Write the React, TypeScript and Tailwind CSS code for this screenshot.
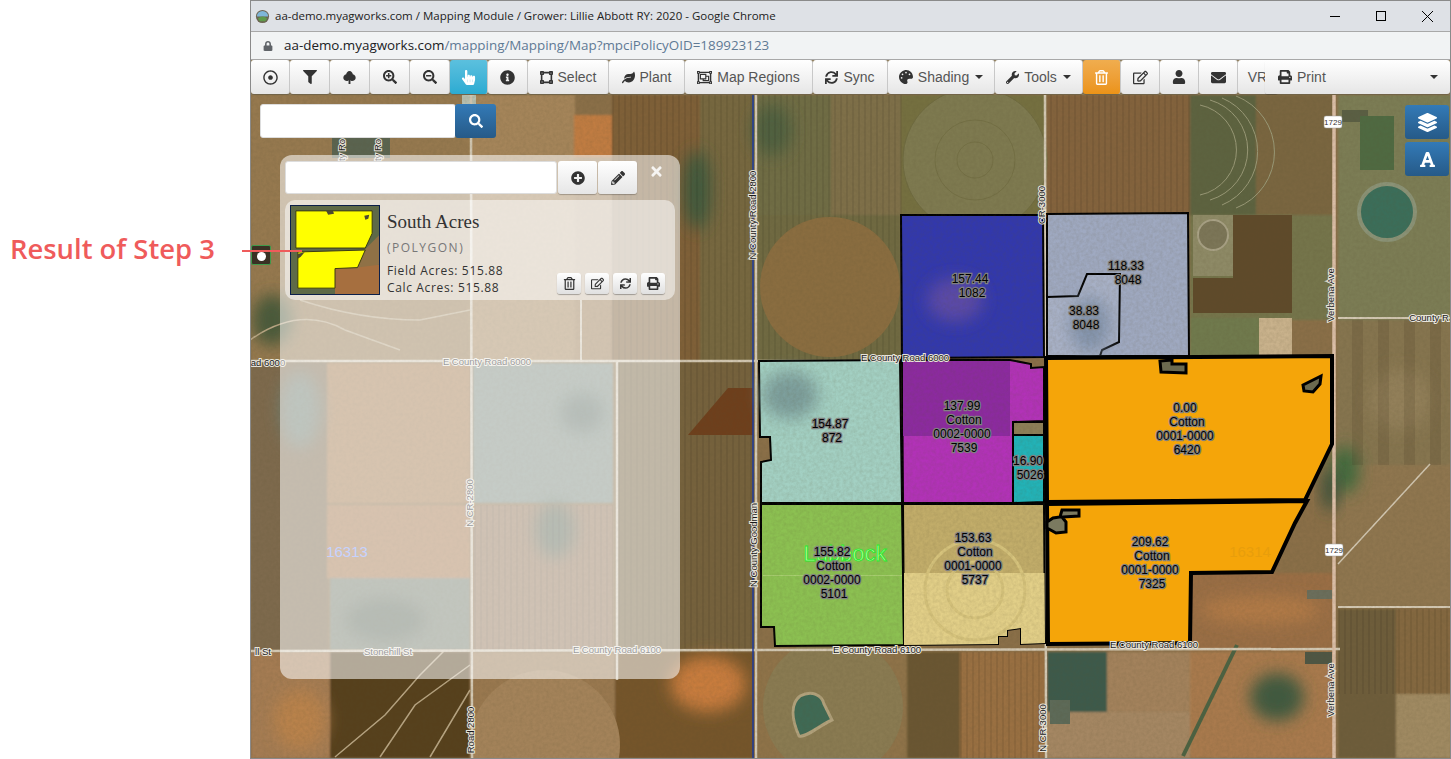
import type { ReactNode } from "react";
import {
  FaEnvelope,
  FaFilter,
  FaFont,
  FaHandPointer,
  FaInfoCircle,
  FaLayerGroup,
  FaLeaf,
  FaLock,
  FaPalette,
  FaPencilAlt,
  FaPlusCircle,
  FaPrint,
  FaRegDotCircle,
  FaRegEdit,
  FaRegObjectGroup,
  FaRegTrashAlt,
  FaSearch,
  FaSearchMinus,
  FaSearchPlus,
  FaSync,
  FaTimes,
  FaUser,
  FaVectorSquare,
  FaWrench,
} from "react-icons/fa";

// satellite background blocks: x, y, w, h, colour
const fields: [number, number, number, number, string][] = [
  [251, 95, 219, 266, "#96794f"],
  [470, 95, 105, 266, "#a5855a"],
  [574, 115, 38, 42, "#c07c42"],
  [575, 157, 40, 204, "#9c7c52"],
  [612, 95, 90, 266, "#7f6039"],
  [700, 95, 55, 266, "#77683f"],
  [757, 95, 74, 120, "#6f6d45"],
  [831, 95, 70, 120, "#7f7048"],
  [757, 215, 144, 146, "#6f6a42"],
  [901, 95, 144, 120, "#74703f"],
  [1047, 95, 143, 120, "#84643c"],
  [1190, 95, 66, 120, "#5d6340"],
  [1256, 95, 78, 120, "#7a6640"],
  [1190, 215, 144, 105, "#75744c"],
  [1190, 318, 70, 40, "#6f7a4d"],
  [1338, 95, 113, 225, "#7b7d54"],
  [1338, 320, 113, 145, "#867450"],
  [1338, 465, 113, 142, "#8f7650"],
  [1338, 609, 58, 149, "#6e5d3a"],
  [1396, 609, 55, 85, "#84673f"],
  [1396, 694, 55, 64, "#a08a62"],
  [251, 361, 77, 290, "#7e6a4e"],
  [327, 363, 143, 140, "#a67c50"],
  [473, 363, 140, 140, "#7f8d82"],
  [327, 505, 143, 73, "#a87a4f"],
  [330, 578, 140, 72, "#78806f"],
  [473, 505, 140, 145, "#96785a"],
  [617, 361, 138, 290, "#76623e"],
  [251, 652, 80, 106, "#a57c52"],
  [330, 652, 140, 106, "#57401f"],
  [470, 652, 145, 106, "#99784f"],
  [615, 652, 140, 106, "#75542c"],
  [757, 652, 150, 106, "#8f7348"],
  [907, 652, 53, 106, "#6a5630"],
  [960, 652, 87, 106, "#9a6f42"],
  [1047, 652, 60, 60, "#3e5a4c"],
  [1107, 652, 83, 60, "#a3825c"],
  [1047, 712, 143, 46, "#a58763"],
  [1190, 573, 144, 78, "#9a6e45"],
  [1190, 652, 144, 106, "#a97a4e"],
];

// soft patches: cx, cy, rx, ry, colour
const patches: [number, number, number, number, string][] = [
  [300, 410, 20, 38, "#6f7f72"],
  [555, 530, 20, 28, "#5f6a58"],
  [708, 684, 38, 28, "#c87c3c"],
  [1277, 697, 27, 24, "#3f5a40"],
  [1345, 470, 14, 24, "#3f6a3c"],
  [697, 190, 14, 40, "#3f5a3c"],
  [772, 130, 20, 26, "#4f6040"],
  [1260, 610, 60, 14, "#b27a46"],
  [272, 320, 20, 26, "#4a5a3a"],
  [1400, 400, 30, 30, "#93805a"],
  [582, 413, 22, 20, "#606f66"],
  [1330, 490, 8, 22, "#38503a"],
  [385, 620, 40, 22, "#5f6b5c"],
  [300, 720, 26, 30, "#b9824c"],
];

// road lines: x1, y1, x2, y2, width
const roads: [number, number, number, number, number][] = [
  [251, 361, 900, 361, 2.5],
  [1190, 358, 1334, 358, 2],
  [251, 651, 1340, 649, 2.5],
  [471, 95, 472, 758, 2.5],
  [617, 361, 617, 680, 2.5],
  [581, 300, 581, 361, 2],
  [756, 95, 756, 758, 2.5],
  [1045, 95, 1046, 758, 2.5],
  [1334, 95, 1334, 758, 3.5],
  [1338, 318, 1451, 318, 2],
  [1338, 607, 1451, 607, 2],
  [1338, 564, 1430, 464, 1.5],
];

const parcelLabels: { x: number; y: number; lines: string[] }[] = [
  { x: 970, y: 283, lines: ["157.44", "1082"] },
  { x: 1126, y: 270, lines: ["118.33", "8048"] },
  { x: 1084, y: 315, lines: ["38.83", "8048"] },
  { x: 830, y: 428, lines: ["154.87", "872"] },
  { x: 962, y: 410, lines: ["137.99", "Cotton", "0002-0000", "7539"] },
  { x: 1028, y: 465, lines: ["16.90", "5026"] },
  { x: 1185, y: 412, lines: ["0.00", "Cotton", "0001-0000", "6420"] },
  { x: 832, y: 556, lines: ["155.82", "Cotton", "0002-0000", "5101"] },
  { x: 973, y: 542, lines: ["153.63", "Cotton", "0001-0000", "5737"] },
  { x: 1150, y: 546, lines: ["209.62", "Cotton", "0001-0000", "7325"] },
];

const roadLabels: { x: number; y: number; text: string; rotate?: boolean }[] = [
  { x: 268, y: 366, text: "ad 6000" },
  { x: 487, y: 365, text: "E County Road 6000" },
  { x: 263, y: 655, text: "ll St" },
  { x: 388, y: 655, text: "Stonehill St" },
  { x: 617, y: 653, text: "E County Road 6100" },
  { x: 877, y: 653, text: "E County Road 6100" },
  { x: 1154, y: 648, text: "E County Road 6100" },
  { x: 905, y: 361, text: "E County Road 6000" },
  { x: 1429, y: 321, text: "County R" },
  { x: 473, y: 503, text: "N CR-2800", rotate: true },
  { x: 474, y: 730, text: "Road 2800", rotate: true },
  { x: 345, y: 150, text: "ty Ro", rotate: true },
  { x: 381, y: 150, text: "ty Ro", rotate: true },
  { x: 756, y: 215, text: "N County Road 2800", rotate: true },
  { x: 757, y: 545, text: "N County Goodman", rotate: true },
  { x: 1045, y: 205, text: "CR-3000", rotate: true },
  { x: 1046, y: 728, text: "N CR-3000", rotate: true },
  { x: 1334, y: 295, text: "Verbena Ave", rotate: true },
  { x: 1334, y: 690, text: "Verbena Ave", rotate: true },
];

function SatelliteMap() {
  return (
    <svg viewBox="251 95 1199 663" className="absolute inset-0 h-full w-full" preserveAspectRatio="none">
      <defs>
        <pattern id="rows" width="6" height="10" patternUnits="userSpaceOnUse">
          <rect width="2" height="10" fill="#000" opacity="0.07" />
        </pattern>
        <pattern id="bands" width="26" height="10" patternUnits="userSpaceOnUse">
          <rect width="11" height="10" fill="#3c2c14" opacity="0.14" />
        </pattern>
        <filter id="soft" x="-50%" y="-50%" width="200%" height="200%">
          <feGaussianBlur stdDeviation="8" />
        </filter>
        <filter id="edge" x="0" y="0" width="100%" height="100%">
          <feGaussianBlur stdDeviation="1.2" />
        </filter>
        <filter id="grain" x="0" y="0" width="100%" height="100%">
          <feTurbulence type="fractalNoise" baseFrequency="0.3" numOctaves="3" seed="4" />
          <feColorMatrix values="0 0 0 0 0.1  0 0 0 0 0.08  0 0 0 0 0.03  0.9 0 0 0 -0.25" />
        </filter>
        <clipPath id="tanClip">
          <polygon points="903,504 1044,504 1045,643 1021,644 1021,628 1007,630 1007,636 998,636 998,644 904,645" />
        </clipPath>
      </defs>

      <rect x="251" y="95" width="1199" height="663" fill="#8a6f48" />
      <g filter="url(#edge)">
        {fields.map(([x, y, w, h, c], i) => (
          <rect key={i} x={x} y={y} width={w} height={h} fill={c} />
        ))}
      </g>
      {patches.map(([cx, cy, rx, ry, c], i) => (
        <ellipse key={i} cx={cx} cy={cy} rx={rx} ry={ry} fill={c} filter="url(#soft)" />
      ))}
      <rect x="612" y="95" width="290" height="266" fill="url(#rows)" />
      <rect x="1047" y="95" width="143" height="120" fill="url(#rows)" />
      <rect x="617" y="361" width="138" height="290" fill="url(#rows)" />
      <rect x="473" y="505" width="140" height="145" fill="url(#rows)" />
      <rect x="960" y="652" width="87" height="106" fill="url(#rows)" />
      <rect x="1338" y="320" width="113" height="145" fill="url(#bands)" />
      <rect x="1338" y="609" width="113" height="85" fill="url(#rows)" />

      {/* dark L-shaped field, NE corner */}
      <path d="M1233 215 H1292 V313 H1193 V278 H1233Z" fill="#5f4a2a" />
      <rect x="1193" y="215" width="40" height="61" fill="#8e8a66" />
      <circle cx="1213" cy="235" r="15" fill="#7c7658" stroke="#a9a286" strokeWidth="2" />
      <rect x="1259" y="318" width="33" height="38" fill="#c9b28c" />

      {/* wedge field left of the county line */}
      <polygon points="688,435 728,388 753,388 753,435" fill="#6e3f1c" />

      {/* centre pivots */}
      <circle cx="830" cy="287" r="70" fill="#8a6d40" />
      <circle cx="975" cy="160" r="72" fill="#7e7a50" stroke="#6f6b40" />
      <circle cx="975" cy="160" r="40" fill="none" stroke="#6f6b40" opacity="0.7" />
      <circle cx="975" cy="160" r="18" fill="none" stroke="#6f6b40" opacity="0.7" />
      <circle cx="833" cy="707" r="70" fill="#8a7b52" />
      <path d="M800 696 C812 690 822 695 824 704 L832 720 C820 725 806 738 799 736 C792 720 790 704 800 696Z" fill="#3f6a55" stroke="#b2a27c" strokeWidth="3" />
      <circle cx="1387" cy="212" r="28" fill="#3b6e5a" stroke="#8b9377" strokeWidth="4" />
      <circle cx="545" cy="745" r="75" fill="#a4835a" />
      <path d="M1200 105 A46 46 0 0 1 1200 195 M1210 100 A52 52 0 0 1 1210 200 M1222 98 A58 58 0 0 1 1222 205 M1236 96 A60 60 0 0 1 1236 208" fill="none" stroke="#9a9a78" strokeWidth="1" />

      {/* homesteads under the panel and along the roads */}
      <rect x="332" y="130" width="58" height="28" fill="#5a6450" />
      <rect x="462" y="95" width="14" height="14" fill="#b8c0b0" />
      <rect x="1342" y="110" width="26" height="12" fill="#5a5f44" />
      <rect x="1360" y="116" width="34" height="54" fill="#4f6a42" />
      <rect x="1307" y="590" width="25" height="9" fill="#6b6e5c" />
      <rect x="1305" y="652" width="27" height="12" fill="#4e5644" />
      <rect x="1050" y="700" width="20" height="24" fill="#5d6a58" />

      {/* irrigation tracks */}
      <path d="M335 757 L385 715 L420 675 L445 650 M380 757 L415 705 L470 665 M430 757 L455 715 L470 690 M250 340 Q300 305 345 330 L400 350 M300 300 Q360 320 420 320 L470 310" fill="none" stroke="#b9a684" strokeWidth="1.5" />
      <path d="M1237 645 L1183 756" fill="none" stroke="#4c6242" strokeWidth="4" />

      {/* roads */}
      {roads.map(([x1, y1, x2, y2, w], i) => (
        <line key={i} x1={x1} y1={y1} x2={x2} y2={y2} stroke={x1 === 1334 ? "#dcbfa8" : "#d4c9b4"} strokeWidth={w} />
      ))}
      <line x1="753" y1="95" x2="753" y2="758" stroke="#1b3aa0" strokeWidth="1.5" />

      {/* parcels */}
      <polygon points="901,215 1043,215 1044,357 902,358" fill="#3238ad" stroke="#000" strokeWidth="2" />
      <ellipse cx="955" cy="300" rx="28" ry="22" fill="#5a4aa8" filter="url(#soft)" />
      <polygon points="1047,214 1188,213 1189,356 1047,356" fill="#9fa9c1" stroke="#000" strokeWidth="2" />
      <polygon points="1047,297 1078,296 1087,274 1120,274 1119,342 1102,350 1100,356 1047,356" fill="#a8b1c7" stroke="#000" strokeWidth="2" />
      <ellipse cx="1090" cy="325" rx="20" ry="28" fill="#8494ad" filter="url(#soft)" />
      <polygon points="759,361 900,360 902,503 761,503 761,462 771,460 770,437 760,437" fill="#a3d0c3" stroke="#000" strokeWidth="2" />
      <ellipse cx="790" cy="395" rx="28" ry="24" fill="#7d9f9c" filter="url(#soft)" />
      <polygon points="902,360 1010,360 1031,364 1031,368 1044,367 1044,421 1013,422 1013,503 903,503" fill="#b232b8" stroke="#000" strokeWidth="2" />
      <rect x="903" y="361" width="107" height="75" fill="#8c2aa0" />
      <rect x="1013" y="422" width="31" height="13" fill="#8d7f58" stroke="#000" strokeWidth="2" />
      <polygon points="1013,435 1044,435 1044,502 1013,503" fill="#22b3b8" stroke="#000" strokeWidth="2" />
      <polygon points="761,504 902,504 904,645 775,646 774,627 761,627" fill="#8cc152" stroke="#000" strokeWidth="2" />
      <rect x="763" y="575" width="139" height="1" fill="#a8d070" />
      <polygon points="903,504 1044,504 1045,643 1021,644 1021,628 1007,630 1007,636 998,636 998,644 904,645" fill="#c2ad6a" stroke="#000" strokeWidth="2" />
      <g clipPath="url(#tanClip)">
        <rect x="904" y="573" width="141" height="72" fill="#e2cf88" />
        <circle cx="975" cy="590" r="50" fill="none" stroke="#d6c37c" strokeWidth="3" />
        <circle cx="975" cy="590" r="28" fill="none" stroke="#d6c37c" strokeWidth="3" />
      </g>

      <rect x="251" y="95" width="1199" height="663" filter="url(#grain)" opacity="0.25" />

      <polygon points="1046,358 1332,356 1332,444 1305,500 1047,502" fill="#f5a509" stroke="#000" strokeWidth="4" />
      <polygon points="1047,504 1307,501 1295,523 1272,572 1191,573 1190,643 1048,644" fill="#f5a509" stroke="#000" strokeWidth="4" />
      <polygon points="1160,361 1161,372 1186,373 1186,364 1172,364 1172,360" fill="#6b6a50" stroke="#000" strokeWidth="3" />
      <polygon points="1303,385 1321,376 1320,384 1313,392 1304,391" fill="#6b6a50" stroke="#000" strokeWidth="3" />
      <polygon points="1047,528 1056,533 1066,532 1066,522 1062,517 1079,516 1079,510 1062,510 1060,517 1053,518 1047,522" fill="#7b7a60" stroke="#000" strokeWidth="3" />

      <g className="font-['Liberation_Sans',sans-serif]">
        <text x="347" y="557" textAnchor="middle" fontSize="15" fill="#7f9cff">16313</text>
        <text x="1250" y="557" textAnchor="middle" fontSize="15" fill="#e89e0c">16314</text>
        <text x="845" y="561" textAnchor="middle" fontSize="22" fill="#c4ffb0" stroke="#2ee82e" strokeWidth="1">Lubbock</text>

        {roadLabels.map((l, i) => (
          <text
            key={i}
            x={l.x}
            y={l.y}
            textAnchor="middle"
            fontSize="9.5"
            fill="#1a1a1a"
            stroke="#e8e4da"
            strokeWidth="2"
            className="[paint-order:stroke]"
            transform={l.rotate ? `rotate(-90 ${l.x} ${l.y})` : undefined}
          >
            {l.text}
          </text>
        ))}

        {parcelLabels.map((p, i) => (
          <text key={i} textAnchor="middle" fontSize="12" fill="#000" stroke="#808080" strokeWidth="2.4" className="[paint-order:stroke]">
            {p.lines.map((t, j) => (
              <tspan key={j} x={p.x + (j % 2 ? 2 : 0)} y={p.y + j * 14}>
                {t}
              </tspan>
            ))}
          </text>
        ))}

        {/* route shields */}
        <rect x="1324" y="116" width="18" height="12" rx="2" fill="#fff" stroke="#999" strokeWidth="0.5" />
        <text x="1333" y="125" textAnchor="middle" fontSize="8" fill="#333">1729</text>
        <rect x="1325" y="544" width="18" height="12" rx="2" fill="#fff" stroke="#999" strokeWidth="0.5" />
        <text x="1334" y="553" textAnchor="middle" fontSize="8" fill="#333">1729</text>
      </g>
    </svg>
  );
}

function ToolButton({ w, active, children }: { w: string; active?: "blue" | "orange"; children: ReactNode }) {
  const tone =
    active === "blue"
      ? "bg-gradient-to-b from-[#5bc0de] to-[#2aabd2] text-white"
      : active === "orange"
        ? "bg-gradient-to-b from-[#f0ad4e] to-[#eb9316] text-white"
        : "bg-gradient-to-b from-white to-[#e6e6e6] text-[#333]";
  return (
    <div className={`${w} ${tone} flex h-[34px] shrink-0 items-center justify-center gap-[5px] rounded-[3px] border-r border-[#ccc] text-[14px] shadow-[0_1px_1px_rgba(0,0,0,0.2)]`}>
      {children}
    </div>
  );
}

function Caret() {
  return <span className="ml-[1px] h-0 w-0 border-x-[4px] border-t-[4px] border-x-transparent border-t-[#333]" />;
}

function TreeIcon() {
  return (
    <svg viewBox="0 0 16 16" className="h-[15px] w-[15px]" fill="#333">
      <path d="M8 1 C10 1 11.5 3 11.5 4.6 C13.5 5 15 7 14.5 9 C14 11 12 12 10 11.6 L9 11 V15 H7 V11 L6 11.6 C4 12 2 11 1.5 9 C1 7 2.5 5 4.5 4.6 C4.5 3 6 1 8 1Z" />
    </svg>
  );
}

function CardButton({ children }: { children: ReactNode }) {
  return (
    <div className="flex h-[21px] w-[24px] items-center justify-center rounded-[3px] bg-gradient-to-b from-white to-[#e0e0e0] text-[13px] text-[#333] shadow-[0_1px_1px_rgba(0,0,0,0.3)]">
      {children}
    </div>
  );
}

function Thumbnail() {
  return (
    <svg viewBox="0 0 90 90" className="h-[90px] w-[90px] shrink-0 border border-[#0b1f4a]">
      <rect width="90" height="90" fill="#5e6a48" />
      <rect x="45" y="60" width="45" height="30" fill="#a66f3f" />
      <polygon points="72,48 90,30 90,60 60,64" fill="#8f7146" />
      <polygon points="5,5 83,5 83,28 76,43 5,43" fill="#ffff00" stroke="#3a3a10" strokeWidth="1" />
      <polygon points="7,47 76,45 68,63 45,64 45,84 7,84" fill="#ffff00" stroke="#3a3a10" strokeWidth="1" />
      <polygon points="36,5 43,5 44,8 38,9" fill="#4d4a30" />
      <polygon points="75,10 80,9 79,13 76,14" fill="#4d4a30" />
      <polygon points="7,49 14,47 10,52 7,54" fill="#4d4a30" />
    </svg>
  );
}

export default function App() {
  return (
    <div className="relative flex h-[759px] w-[1451px] overflow-hidden bg-white font-['Liberation_Sans',sans-serif]">
      {/* step annotation on the left */}
      <div className="w-[250px] shrink-0 pl-[10px] pt-[231px]">
        <div className="font-['Open_Sans',sans-serif] text-[27.4px] font-semibold leading-[36px] text-[#ef5b5b]">Result of Step 3</div>
      </div>

      <div className="flex h-full w-[1201px] shrink-0 flex-col border-x border-t border-x-[#8a8a8a] border-t-[#8a8a8a]">
        {/* chrome title bar */}
        <div className="flex h-[31px] shrink-0 items-center border-b border-[#a8a8a8] bg-[#dee1e6] pl-[4px]">
          <svg viewBox="0 0 16 16" className="h-[15px] w-[15px]">
            <circle cx="8" cy="8" r="7" fill="#6b6452" />
            <path d="M2 8 A6 6 0 0 1 14 8Z" fill="#7fb6d8" />
            <path d="M3 10 Q8 6 13 10 L11 13 H5Z" fill="#5f9a4a" />
          </svg>
          <span className="ml-[5px] font-['Open_Sans',sans-serif] text-[11.5px] text-[#222]">aa-demo.myagworks.com / Mapping Module / Grower: Lillie Abbott RY: 2020 - Google Chrome</span>
          <div className="ml-auto flex items-center">
            <div className="flex w-[46px] justify-center"><div className="h-[1px] w-[10px] bg-black" /></div>
            <div className="flex w-[46px] justify-center"><div className="h-[10px] w-[10px] border border-black" /></div>
            <div className="flex w-[46px] justify-center">
              <svg viewBox="0 0 10 10" className="h-[11px] w-[11px]"><path d="M0 0 L10 10 M10 0 L0 10" stroke="#000" strokeWidth="0.9" /></svg>
            </div>
          </div>
        </div>

        {/* address bar */}
        <div className="flex h-[28px] shrink-0 items-center border-b border-[#a8a8a8] bg-[#f1f3f4] pl-[12px] font-['Open_Sans',sans-serif] text-[13.4px]">
          <FaLock className="text-[10px] text-[#5f6368]" />
          <span className="ml-[11px] text-[#202124]">aa-demo.myagworks.com</span>
          <span className="text-[#5f7a94]">/mapping/Mapping/Map?mpciPolicyOID=189923123</span>
        </div>

        {/* toolbar */}
        <div className="relative flex h-[35px] shrink-0 items-start overflow-hidden bg-[#8c7a58]">
          <ToolButton w="w-[39px]"><FaRegDotCircle className="text-[15px]" /></ToolButton>
          <ToolButton w="w-[40px]"><FaFilter className="text-[14px]" /></ToolButton>
          <ToolButton w="w-[40px]"><TreeIcon /></ToolButton>
          <ToolButton w="w-[40px]"><FaSearchPlus className="text-[14px]" /></ToolButton>
          <ToolButton w="w-[40px]"><FaSearchMinus className="text-[14px]" /></ToolButton>
          <ToolButton w="w-[38px]" active="blue"><FaHandPointer className="text-[15px]" /></ToolButton>
          <ToolButton w="w-[40px]"><FaInfoCircle className="text-[15px]" /></ToolButton>
          <ToolButton w="w-[81px]"><FaVectorSquare className="text-[13px]" /><span className="text-[#555]">Select</span></ToolButton>
          <ToolButton w="w-[76px]"><FaLeaf className="text-[13px]" /><span className="text-[#555]">Plant</span></ToolButton>
          <ToolButton w="w-[128px]"><FaRegObjectGroup className="text-[15px]" /><span className="text-[#555]">Map Regions</span></ToolButton>
          <ToolButton w="w-[75px]"><FaSync className="text-[13px]" /><span className="text-[#555]">Sync</span></ToolButton>
          <ToolButton w="w-[107px]"><FaPalette className="text-[14px]" /><span className="text-[#555]">Shading</span><Caret /></ToolButton>
          <ToolButton w="w-[88px]"><FaWrench className="text-[13px]" /><span className="text-[#555]">Tools</span><Caret /></ToolButton>
          <ToolButton w="w-[38px]" active="orange"><FaRegTrashAlt className="text-[15px]" /></ToolButton>
          <ToolButton w="w-[39px]"><FaRegEdit className="text-[15px]" /></ToolButton>
          <ToolButton w="w-[39px]"><FaUser className="text-[14px]" /></ToolButton>
          <ToolButton w="w-[39px]"><FaEnvelope className="text-[15px]" /></ToolButton>
          <ToolButton w="w-[40px]"><span className="text-[#555]">VR</span></ToolButton>
          <div className="absolute right-0 top-0 flex h-[34px] w-[185px] items-center rounded-[3px] bg-gradient-to-b from-white to-[#e6e6e6] pl-[13px] pr-[12px] text-[14px] text-[#555] shadow-[0_1px_1px_rgba(0,0,0,0.2)]">
            <FaPrint className="text-[14px] text-[#333]" />
            <span className="ml-[5px]">Print</span>
            <span className="ml-auto flex items-center"><Caret /></span>
          </div>
        </div>

        {/* map */}
        <div className="relative min-h-0 flex-1 overflow-hidden border-b border-[#8a8a8a]">
          <SatelliteMap />

          <div className="absolute left-[9px] top-[9px] flex">
            <div className="h-[34px] w-[196px] rounded-[3px] border border-[#ddd] bg-white" />
            <div className="ml-[-1px] flex h-[34px] w-[41px] items-center justify-center rounded-[3px] bg-gradient-to-b from-[#337ab7] to-[#265a88] text-white">
              <FaSearch className="text-[14px]" />
            </div>
          </div>

          <div className="absolute right-[1px] top-[10px] flex flex-col gap-[3px]">
            <div className="flex h-[34px] w-[44px] items-center justify-center rounded-[3px] bg-gradient-to-b from-[#337ab7] to-[#265a88] text-white"><FaLayerGroup className="text-[19px]" /></div>
            <div className="flex h-[34px] w-[44px] items-center justify-center rounded-[3px] bg-gradient-to-b from-[#337ab7] to-[#265a88] text-white"><FaFont className="text-[17px]" /></div>
          </div>

          {/* fields panel */}
          <div className="absolute left-[29px] top-[60px] h-[524px] w-[400px] rounded-[12px] bg-white/55 px-[5px] pt-[6px]">
            <div className="flex h-[33px] items-start">
              <div className="h-[33px] w-[272px] rounded-[3px] border border-[#ddd] bg-white" />
              <div className="ml-[1px] flex h-[33px] w-[39px] items-center justify-center rounded-[3px] bg-gradient-to-b from-white to-[#e6e6e6] text-[14px] text-[#333] shadow-[0_1px_1px_rgba(0,0,0,0.25)]"><FaPlusCircle /></div>
              <div className="ml-[1px] flex h-[33px] w-[39px] items-center justify-center rounded-[3px] bg-gradient-to-b from-white to-[#e6e6e6] text-[14px] text-[#333] shadow-[0_1px_1px_rgba(0,0,0,0.25)]"><FaPencilAlt /></div>
              <FaTimes className="ml-[12px] mt-[3px] text-[15px] text-white/85" />
            </div>

            <div className="mt-[6px] flex h-[100px] rounded-[10px] bg-white/50 py-[5px] pl-[5px] pr-[10px]">
              <Thumbnail />
              <div className="ml-[7px] flex flex-1 flex-col">
                <div className="mt-[7px] font-['Liberation_Serif',serif] text-[19px] leading-[20px] text-[#333]">South Acres</div>
                <div className="mt-[8px] font-['Open_Sans',sans-serif] text-[12px] leading-[16px] tracking-[1.5px] text-[#777]">(POLYGON)</div>
                <div className="mt-[6px] flex items-end justify-between">
                  <div className="font-['Open_Sans',sans-serif] text-[12px] leading-[17px] tracking-[0.65px] text-[#333]">
                    <div>Field Acres: 515.88</div>
                    <div>Calc Acres: 515.88</div>
                  </div>
                  <div className="mb-[2px] flex gap-[4px]">
                    <CardButton><FaRegTrashAlt /></CardButton>
                    <CardButton><FaRegEdit /></CardButton>
                    <CardButton><FaSync className="text-[11px]" /></CardButton>
                    <CardButton><FaPrint /></CardButton>
                  </div>
                </div>
              </div>
            </div>
          </div>

          {/* field marker peeking out behind the panel */}
          <div className="absolute left-0 top-[150px] flex h-[20px] w-[20px] items-center justify-center rounded-[2px] border border-[#3f9a4a] bg-[#3a3024]">
            <div className="mt-[3px] h-[9px] w-[9px] rounded-full bg-white" />
          </div>
        </div>
      </div>

      {/* callout line */}
      <div className="absolute left-[242px] top-[250px] h-[2px] w-[60px] bg-[#ef5b5b]" />
    </div>
  );
}
